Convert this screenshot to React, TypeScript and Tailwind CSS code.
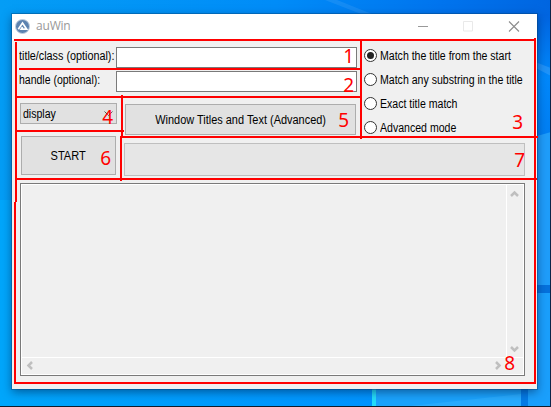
import type { ReactNode } from 'react';

const modes = [
  { label: 'Match the title from the start', on: true },
  { label: 'Match any substring in the title', on: false },
  { label: 'Exact title match', on: false },
  { label: 'Advanced mode', on: false },
];

const lines = [
  'left-[14px] top-[39px] w-[522px] h-[2px]',
  'left-[15px] top-[42px] w-[2px] h-[160px]',
  'left-[14px] top-[202px] w-[2px] h-[182px]',
  'left-[14px] top-[382px] w-[522px] h-[2px]',
  'left-[534px] top-[38px] w-[2px] h-[346px]',
  'left-[19px] top-[68px] w-[342px] h-[2px]',
  'left-[16px] top-[96px] w-[345px] h-[2px]',
  'left-[360px] top-[40px] w-[2px] h-[99px]',
  'left-[121px] top-[95px] w-[2px] h-[42px]',
  'left-[16px] top-[130px] w-[108px] h-[2px]',
  'left-[120px] top-[136px] w-[418px] h-[2px]',
  'left-[120px] top-[136px] w-[2px] h-[45px]',
  'left-[17px] top-[178px] w-[520px] h-[2px]',
];

const numbers = [
  ['1', 'left-[343px] top-[47px]'],
  ['2', 'left-[343px] top-[76px]'],
  ['3', 'left-[512px] top-[113px]'],
  ['4', 'left-[102px] top-[108px]'],
  ['5', 'left-[338px] top-[111px]'],
  ['6', 'left-[100px] top-[149px]'],
  ['7', 'left-[514px] top-[151px]'],
  ['8', 'left-[504px] top-[354px]'],
];

function Wallpaper() {
  return (
    <svg className="absolute inset-0" width="551" height="407" viewBox="0 0 551 407">
      <defs>
        <linearGradient id="sky" x1="0" x2="1" y1="0" y2="0">
          <stop offset="0" stopColor="#049df5" />
          <stop offset="0.5" stopColor="#008cf8" />
          <stop offset="0.8" stopColor="#0074ee" />
          <stop offset="1" stopColor="#0065e0" />
        </linearGradient>
        <linearGradient id="floor" x1="0" x2="1" y1="0" y2="0">
          <stop offset="0" stopColor="#00a6fb" />
          <stop offset="0.68" stopColor="#0094ff" />
          <stop offset="1" stopColor="#0a94fb" />
        </linearGradient>
        <linearGradient id="side" x1="0" x2="0" y1="0" y2="1">
          <stop offset="0" stopColor="#0064e0" />
          <stop offset="0.5" stopColor="#0088fb" />
          <stop offset="1" stopColor="#007ef2" />
        </linearGradient>
      </defs>
      <rect width="551" height="407" fill="url(#sky)" />
      <path d="M0 200H551V407H0Z" fill="url(#floor)" />
      <path d="M530 14H551V140H530Z" fill="url(#side)" />
      <path d="M325 0H337L372 14H361Z" fill="#fff" fillOpacity=".08" />
      <path d="M530 60L551 68V76L530 65Z" fill="#fff" fillOpacity=".12" />
      <path d="M530 138L551 132V287H530Z" fill="#1f9dfa" />
      <path d="M530 285H551V293H530Z" fill="#0571dc" />
      <path d="M376 389H521V407H376Z" fill="#1ba3fc" />
      <path d="M400 407L521 394V407Z" fill="#35b3ff" fillOpacity=".5" />
      <path d="M372 389H376V407H372Z" fill="#25dcfa" />
      <path d="M528 293H551V407H528Z" fill="#1a9ffc" />
      <path d="M521 389H528V407H521Z" fill="#047be5" />
      <path d="M0 406H551V407H0Z" fill="#101c2c" />
      <path d="M550 0H551V407H550Z" fill="#0b2448" />
    </svg>
  );
}

function Chevron({ d }: { d: string }) {
  return (
    <svg width="9" height="9" viewBox="0 0 9 9" fill="none" stroke="#bfbfbf" strokeWidth="2.5">
      <path d={d} />
    </svg>
  );
}

function Button({ children, className }: { children?: ReactNode; className: string }) {
  return (
    <button className={`flex items-center whitespace-nowrap border border-[#adadad] bg-[#e1e1e1] ${className}`}>
      {children}
    </button>
  );
}

export default function App() {
  return (
    <div className="relative h-[407px] w-[551px] overflow-hidden pl-3 pt-3.5 font-['Liberation_Sans',Arial,sans-serif] text-[12px] leading-[14px] text-black">
      <Wallpaper />
      <div className="relative flex h-[375px] w-[525px] flex-col bg-[#f0f0f0] shadow-[0_0_0_1px_rgba(0,60,110,0.35),0_3px_9px_rgba(0,20,60,0.5)]">
        <header className="flex h-[26px] shrink-0 items-center bg-white">
          <svg className="ml-[3px] mt-[-2px]" width="15" height="15" viewBox="0 0 15 15">
            <circle cx="7.5" cy="7.5" r="7" fill="#5d83b0" stroke="#c3d1e1" />
            <path d="M3.3 10.2L7.5 4L11.7 10.2H6.2L7.6 8" fill="none" stroke="#fff" strokeWidth="1.7" />
          </svg>
          <span className="ml-[6px] mt-[-2px] font-['Open_Sans','Noto_Sans',sans-serif] text-[12px] tracking-[-0.2px] text-[#999]">
            auWin
          </span>
          <svg className="ml-auto mr-[17px] mt-[-2px]" width="102" height="11" viewBox="0 0 102 11" fill="none">
            <path d="M0 5.5H10" stroke="#999" />
            <path d="M45.500 .5H54.500V10H45.500Z" stroke="#e9e9e9" />
            <path d="M91 .5L101 10.500M101 .5L91 10.500" stroke="#8c8c8c" strokeWidth="1.1" />
          </svg>
        </header>

        <main className="flex flex-col pl-2 pr-3">
          <div className="flex">
            <div className="flex w-[342px] shrink-0 flex-col pt-[7px]">
              <label className="flex h-[21px]">
                <span className="-ml-px mr-px w-24 shrink-0 origin-left scale-x-[0.9] whitespace-nowrap pt-[2px]">
                  title/class (optional):
                </span>
                <input className="h-[21px] w-[241px] border border-[#7a7a7a] bg-white" />
              </label>
              <label className="mt-[3px] flex h-[21px]">
                <span className="-ml-px mr-px w-24 shrink-0 origin-left scale-x-[0.875] whitespace-nowrap pt-[2px]">
                  handle (optional):
                </span>
                <input className="h-[21px] w-[241px] border border-[#7a7a7a] bg-white" />
              </label>
              <div className="mt-[11px] flex items-start gap-2">
                <Button className="h-[21px] w-[97px] justify-between pl-[2px] pr-[3px]">
                  <span className="origin-left scale-x-[0.88] pt-px">display</span>
                  <svg width="9" height="6" viewBox="0 0 9 6" fill="none" stroke="#555">
                    <path d="M.5 .5L4.500 4.500L8.500 .5" />
                  </svg>
                </Button>
                <Button className="mt-px h-[31px] w-[231px] justify-center">
                  <span className="scale-x-[0.912]">Window Titles and Text (Advanced)</span>
                </Button>
              </div>
            </div>
            <div className="flex flex-col gap-[11px] pl-[2px] pt-[9px]">
              {modes.map((m) => (
                <label key={m.label} className="flex h-[13px] items-center gap-[3px] whitespace-nowrap">
                  <span className="flex size-[13px] shrink-0 items-center justify-center rounded-full border border-[#333] bg-white">
                    {m.on && <span className="size-[7px] rounded-full bg-[#222]" />}
                  </span>
                  <span className="origin-left scale-x-[0.88]">{m.label}</span>
                </label>
              ))}
            </div>
          </div>

          <div className="mt-px flex h-[40px] gap-2 pl-px">
            <Button className="h-[39px] w-[95px] justify-center pr-px">
              <span className="scale-x-[0.92]">START</span>
            </Button>
            <div className="mt-[7px] h-[33px] w-[401px] border border-[#bfbfbf] bg-[#e6e6e6]" />
          </div>

          <div className="mt-[7px] flex h-[193px] w-[505px] flex-col border border-[#7a7a7a]">
            <div className="flex grow flex-col border border-white">
              <div className="flex grow">
                <div className="grow" />
                <div className="flex w-[17px] flex-col items-center justify-between border-l border-white pb-[3px] pr-px pt-1">
                  <Chevron d="M1 7L4.500 3.500L8 7" />
                  <Chevron d="M1 2L4.500 5.500L8 2" />
                </div>
              </div>
              <div className="flex h-[17px] items-center justify-between border-t border-white pb-px pl-[3px] pr-[20px]">
                <Chevron d="M7 1L3.500 4.500L7 8" />
                <Chevron d="M2 1L5.500 4.500L2 8" />
              </div>
            </div>
          </div>
        </main>
      </div>

      {lines.map((l) => (
        <div key={l} className={`absolute bg-[#ff0000] ${l}`} />
      ))}
      {numbers.map(([n, at]) => (
        <span
          key={n}
          className={`absolute scale-x-[0.95] font-['Noto_Sans',sans-serif] text-[20px] leading-[18px] text-[#ff0000] ${at}`}
        >
          {n}
        </span>
      ))}
    </div>
  );
}
